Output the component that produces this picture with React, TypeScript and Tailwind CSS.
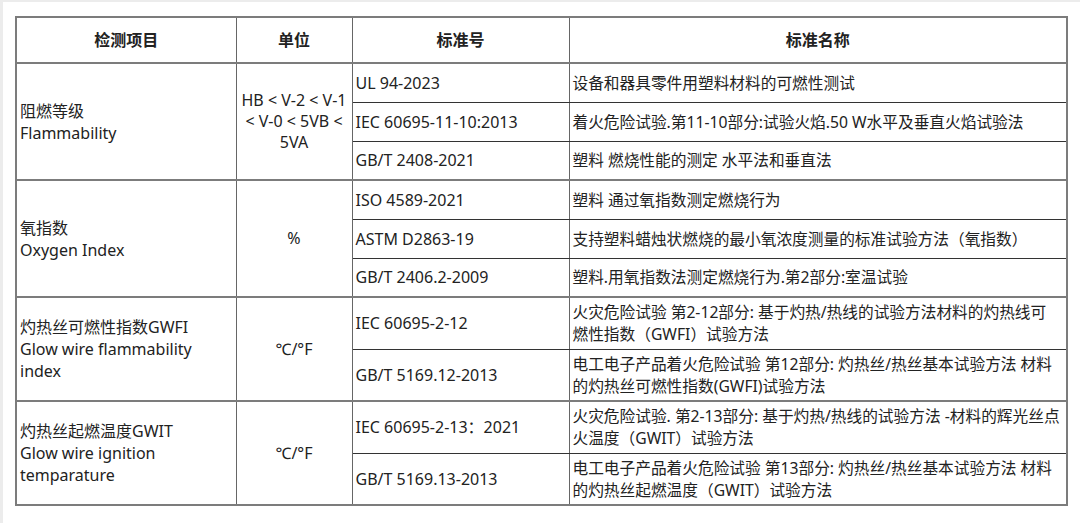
import React from "react";

type Sub = { code: string; name: React.ReactNode };
type Group = { item: React.ReactNode; unit: React.ReactNode; tall: boolean; subs: Sub[] };

const groups: Group[] = [
  {
    item: (<>阻燃等级<br />Flammability</>),
    unit: (<>HB &lt; V-2 &lt; V-1<br />&lt; V-0 &lt; 5VB &lt;<br />5VA</>),
    tall: false,
    subs: [
      { code: "UL 94-2023", name: "设备和器具零件用塑料材料的可燃性测试" },
      { code: "IEC 60695-11-10:2013", name: "着火危险试验.第11-10部分:试验火焰.50 W水平及垂直火焰试验法" },
      { code: "GB/T 2408-2021", name: "塑料 燃烧性能的测定 水平法和垂直法" },
    ],
  },
  {
    item: (<>氧指数<br />Oxygen Index</>),
    unit: "%",
    tall: false,
    subs: [
      { code: "ISO 4589-2021", name: "塑料 通过氧指数测定燃烧行为" },
      { code: "ASTM D2863-19", name: "支持塑料蜡烛状燃烧的最小氧浓度测量的标准试验方法（氧指数）" },
      { code: "GB/T 2406.2-2009", name: "塑料.用氧指数法测定燃烧行为.第2部分:室温试验" },
    ],
  },
  {
    item: (<>灼热丝可燃性指数GWFI<br />Glow wire flammability<br />index</>),
    unit: "℃/°F",
    tall: true,
    subs: [
      { code: "IEC 60695-2-12", name: (<>火灾危险试验 第2-12部分: 基于灼热/热线的试验方法材料的灼热线可<br />燃性指数（GWFI）试验方法</>) },
      { code: "GB/T 5169.12-2013", name: (<>电工电子产品着火危险试验 第12部分: 灼热丝/热丝基本试验方法 材料<br />的灼热丝可燃性指数(GWFI)试验方法</>) },
    ],
  },
  {
    item: (<>灼热丝起燃温度GWIT<br />Glow wire ignition<br />temparature</>),
    unit: "℃/°F",
    tall: true,
    subs: [
      { code: "IEC 60695-2-13：2021", name: (<>火灾危险试验. 第2-13部分: 基于灼热/热线的试验方法 -材料的辉光丝点<br />火温度（GWIT）试验方法</>) },
      { code: "GB/T 5169.13-2013", name: (<>电工电子产品着火危险试验 第13部分: 灼热丝/热丝基本试验方法 材料<br />的灼热丝起燃温度（GWIT）试验方法</>) },
    ],
  },
];

export default function App() {
  return (
    <div className="w-[1080px] h-[523px] bg-white border-t-2 border-l-[3px] border-[#ececec] overflow-hidden font-['Noto_Sans','Noto_Sans_CJK_SC',sans-serif]">
      <div className="pl-[12px] pt-[14px]">
        <table className="w-[1051px] table-fixed border-collapse text-[16px] leading-[22px] text-[#222] border-2 border-[#7c7c7c]">
          <colgroup>
            <col className="w-[220px]" />
            <col className="w-[116px]" />
            <col className="w-[217px]" />
            <col className="w-[498px]" />
          </colgroup>
          <thead>
            <tr className="h-[46px]">
              {["检测项目", "单位", "标准号", "标准名称"].map((h) => (
                <th key={h} className="font-bold text-[16px] text-center border-l border-r border-[#666] border-b-2 border-b-[#7c7c7c] p-0">
                  {h}
                </th>
              ))}
            </tr>
          </thead>
          <tbody>
            {groups.map((g, gi) =>
              g.subs.map((s, si) => {
                const last = si === g.subs.length - 1;
                const bottom = last ? "border-b-2 border-b-[#7c7c7c]" : "border-b border-b-[#333]";
                return (
                  <tr key={`${gi}-${si}`} className={g.tall ? "h-[52px]" : "h-[39px]"}>
                    {si === 0 && (
                      <td rowSpan={g.subs.length} className="align-middle pl-[3px] pr-1 whitespace-nowrap border-l border-r border-[#666] border-b-2 border-b-[#7c7c7c]">
                        {g.item}
                      </td>
                    )}
                    {si === 0 && (
                      <td rowSpan={g.subs.length} className="align-middle text-center leading-[21px] p-0 whitespace-nowrap border-l border-r border-[#666] border-b-2 border-b-[#7c7c7c]">
                        {g.unit}
                      </td>
                    )}
                    <td className={`align-middle pl-[3px] pr-1 whitespace-nowrap border-l border-r border-[#666] ${bottom}`}>{s.code}</td>
                    <td className={`align-middle pl-[3px] pr-0 text-[15.7px] whitespace-nowrap border-l border-r border-[#666] ${bottom}`}>{s.name}</td>
                  </tr>
                );
              })
            )}
          </tbody>
        </table>
      </div>
    </div>
  );
}
